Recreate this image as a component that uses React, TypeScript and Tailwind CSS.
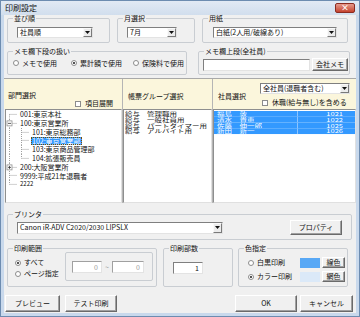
import React from 'react';

const FONT = "font-['Noto_Sans_CJK_JP','Noto_Sans',sans-serif]";

function Arrow() {
  return (
    <svg width="5" height="3" viewBox="0 0 5 3">
      <path d="M0 0H5L2.5 3Z" fill="#111" />
    </svg>
  );
}

function Select({ value, className = '' }: { value: string; className?: string }) {
  return (
    <div className={`flex items-stretch bg-white border border-[#7f7f7f] border-r-[#e3e3e3] border-b-[#e3e3e3] ${className}`}>
      <span className="flex-1 truncate pl-[2px] text-[7px] leading-[9px] self-center">{value}</span>
      <span className="flex w-[9px] items-center justify-center border border-[#fafafa] border-r-[#7a7a7a] border-b-[#7a7a7a] bg-[#ececec]">
        <Arrow />
      </span>
    </div>
  );
}

function Radio({ label, checked = false, className = '' }: { label: string; checked?: boolean; className?: string }) {
  return (
    <span className={`flex items-center gap-[3px] ${className}`}>
      <span className="flex h-[6px] w-[6px] shrink-0 items-center justify-center rounded-full border border-[#8c8c8c] bg-white">
        {checked && <span className="h-[2px] w-[2px] rounded-full bg-[#1a1a1a]" />}
      </span>
      <span className="whitespace-nowrap">{label}</span>
    </span>
  );
}

function Check({ label }: { label: string }) {
  return (
    <span className="flex items-center gap-[4px]">
      <span className="h-[6px] w-[6px] shrink-0 border border-[#8c8c8c] bg-white" />
      <span className="whitespace-nowrap">{label}</span>
    </span>
  );
}

function Btn({ children, className = '' }: { children: React.ReactNode; className?: string }) {
  return (
    <button
      type="button"
      className={`flex items-center justify-center bg-[#f0f0f0] border border-white border-r-[#6a6a6a] border-b-[#6a6a6a] shadow-[inset_-1px_-1px_0_#a0a0a0] text-[7px] leading-[7px] ${className}`}
    >
      {children}
    </button>
  );
}

function Group({ label, className = '', children }: { label?: string; className?: string; children?: React.ReactNode }) {
  return (
    <fieldset className={`rounded-[2px] border border-[#c9cdd2] ${className}`}>
      {label && <legend className="ml-[5px] px-[1px] text-[7px] leading-[7px]">{label}</legend>}
      {children}
    </fieldset>
  );
}

type TreeNode = { text: string; level: 0 | 1; box?: '-' | '+'; sel?: boolean; last?: boolean; first?: boolean };

const TREE: TreeNode[] = [
  { text: '001:東京本社', level: 0, first: true },
  { text: '100:東京営業所', level: 0, box: '-' },
  { text: '101:東京総務部', level: 1 },
  { text: '102:東京営業部', level: 1, sel: true },
  { text: '103:東京商品管理部', level: 1 },
  { text: '104:拡張販売員', level: 1, last: true },
  { text: '200:大阪営業所', level: 0, box: '+' },
  { text: '9999:平成21年退職者', level: 0 },
  { text: '2222', level: 0, last: true },
];

const ROW = 8.75;

function Connector({ n }: { n: TreeNode }) {
  const mid = ROW / 2;
  const w = n.level === 0 ? 12 : 24;
  const line = { stroke: '#a0a0a0', strokeWidth: 1, strokeDasharray: '1 1' };
  return (
    <svg width={w} height={ROW} viewBox={`0 0 ${w} ${ROW}`} className="shrink-0">
      {n.level === 0 ? (
        <>
          <line x1="3.5" y1={n.first ? mid : 0} x2="3.5" y2={n.last ? mid : ROW} {...line} />
          <line x1="3.5" y1={mid} x2="11" y2={mid} {...line} />
        </>
      ) : (
        <>
          <line x1="3.5" y1="0" x2="3.5" y2={ROW} {...line} />
          <line x1="15.5" y1="0" x2="15.5" y2={n.last ? mid : ROW} {...line} />
          <line x1="15.5" y1={mid} x2="23" y2={mid} {...line} />
        </>
      )}
      {n.box && (
        <>
          <rect x="1" y={mid - 2.5} width="5" height="5" fill="#fff" stroke="#919191" strokeWidth="0.8" />
          <line x1="2" y1={mid} x2="5" y2={mid} stroke="#333" strokeWidth="0.8" />
          {n.box === '+' && <line x1="3.5" y1={mid - 1.5} x2="3.5" y2={mid + 1.5} stroke="#333" strokeWidth="0.8" />}
        </>
      )}
    </svg>
  );
}

const FORMS = [
  ['給与', '管理職用'],
  ['給与', '一般社員用'],
  ['給与', 'パートタイマー用'],
  ['給与', 'アルバイト用'],
];

const STAFF = [
  ['福島　敦', '1021'],
  ['清水　貴恵', '1022'],
  ['佐藤　伸一郎', '1025'],
  ['新田　新一', '1026'],
];

export default function App() {
  return (
    <div className={`flex h-[317px] w-[360px] flex-col border border-[#6d8cb0] bg-[#c9d9ec] text-[#111] ${FONT}`}>
      {/* title bar */}
      <div className="flex h-[14px] items-center justify-between bg-linear-to-b from-[#e2eaf4] to-[#d1deed] pl-[4px] pr-[4px]">
        <span className="text-[8px] leading-[8px]">印刷設定</span>
        <span className="flex h-[10px] w-[20px] items-center justify-center rounded-[2px] border border-[#8b2b20] bg-linear-to-b from-[#e59a8c] to-[#c4402c] text-[8px] leading-[8px] font-bold text-white">
          ×
        </span>
      </div>

      {/* client area */}
      <div className="mx-[3px] mb-[3px] flex flex-1 flex-col bg-[#f0f0f0] text-[7px] leading-[7px]">
        {/* row 1 */}
        <div className="flex">
          <Group label="並び順" className="ml-[3px] h-[28px] w-[103px]">
            <Select value="社員順" className="ml-[9px] mt-[5px] h-[11px] w-[76px]" />
          </Group>
          <Group label="月選択" className="ml-[7px] h-[28px] w-[78px]">
            <Select value="7月" className="ml-[9px] mt-[5px] h-[11px] w-[50px]" />
          </Group>
          <Group label="用紙" className="ml-[7px] h-[28px] w-[146px]">
            <Select value="白紙(2人用/破線あり)" className="ml-[10px] mt-[5px] h-[11px] w-[124px]" />
          </Group>
        </div>

        {/* row 2 */}
        <div className="mt-[5px] flex">
          <Group label="メモ欄下段の扱い" className="ml-[3px] h-[27px] w-[180px]">
            <div className="mt-[4px] flex h-[8px] items-center pl-[5px]">
              <Radio label="メモで使用" className="w-[58px]" />
              <Radio label="累計額で使用" checked className="w-[62px]" />
              <Radio label="保険料で使用" />
            </div>
          </Group>
          <Group label="メモ欄上段(全社員)" className="ml-[11px] h-[27px] w-[152px]">
            <div className="mt-[3px] flex items-center gap-[2px] pl-[4px]">
              <div className="h-[12px] w-[107px] border border-[#7f7f7f] border-r-[#e3e3e3] border-b-[#e3e3e3] bg-white" />
              <Btn className="h-[13px] w-[36px]">会社メモ</Btn>
            </div>
          </Group>
        </div>

        {/* selection panel */}
        <div className="mt-[3px] flex h-[125px] border-t border-[#a9a9a9]">
          {/* departments */}
          <div className="flex w-[118px] flex-col">
            <div className="h-[30px] bg-[#fbf6dc] pl-[4px] pt-[13px]">
              <div>部門選択</div>
              <div className="ml-[67px] mt-[1px]">
                <Check label="項目展開" />
              </div>
            </div>
            <div className="flex-1 overflow-hidden border border-[#8e8f8f] border-r-[#e0e0e0] border-b-[#e0e0e0] bg-white ml-[1px]">
              {TREE.map(n => (
                <div key={n.text} className="flex items-center" style={{ height: ROW }}>
                  <Connector n={n} />
                  <span
                    className={`ml-[1px] whitespace-nowrap px-[1px] leading-[8px] ${
                      n.sel ? 'bg-[#3399ff] text-white outline outline-dotted outline-[#7a4f00] outline-offset-[-1px]' : ''
                    } ${n.text === '2222' ? 'text-[6px]' : ''}`}
                  >
                    {n.text}
                  </span>
                </div>
              ))}
            </div>
          </div>

          {/* form groups */}
          <div className="flex w-[90px] flex-col border-l border-[#b5b5b5]">
            <div className="h-[30px] bg-[#fbf6dc] pl-[5px] pt-[14px]">帳票グループ選択</div>
            <div className="flex-1 overflow-hidden border border-[#8e8f8f] border-r-[#e0e0e0] border-b-[#e0e0e0] bg-white pl-[1px] pt-[1px]">
              <div className="origin-top scale-y-[0.72]">
                {FORMS.map(([a, b]) => (
                  <div key={b} className="flex h-[8px] items-center text-[7.5px] leading-[8px]">
                    <span className="w-[22px]">{a}</span>
                    <span>{b}</span>
                  </div>
                ))}
              </div>
            </div>
          </div>

          {/* staff */}
          <div className="flex flex-1 flex-col border-l border-[#b5b5b5]">
            <div className="flex h-[30px] bg-[#fbf6dc]">
              <div className="w-[47px] pl-[5px] pt-[14px]">社員選択</div>
              <div className="flex flex-col pt-[4px]">
                <Select value="全社員(退職者含む)" className="h-[11px] w-[90px]" />
                <div className="ml-[2px] mt-[5px]">
                  <Check label="休職(給与無し)を含める" />
                </div>
              </div>
            </div>
            <div className="flex-1 overflow-hidden border border-[#8e8f8f] border-r-[#e0e0e0] border-b-[#e0e0e0] bg-white pt-[1px]">
              <div className="origin-top scale-y-[0.72]">
                {STAFF.map(([name, no]) => (
                  <div key={no} className="flex h-[8px] text-[7.5px] leading-[8px] text-white">
                    <span className="w-[84px] border-r border-[#8cc4ff] bg-[#3399ff] pl-[3px]">{name}</span>
                    <span className="flex-1 bg-[#3399ff] pr-[12px] text-right">{no}</span>
                  </div>
                ))}
              </div>
            </div>
          </div>
        </div>

        {/* printer */}
        <Group label="プリンタ" className="ml-[3px] mt-[8px] h-[29px] w-[345px]">
          <div className="mt-[2px] flex h-[15px] items-center pl-[9px] pr-[9px]">
            <Select value="Canon iR-ADV C2020/2030 LIPSLX" className="h-[12px] w-[206px]" />
            <Btn className="ml-auto h-[15px] w-[52px]">プロパティ</Btn>
          </div>
        </Group>

        {/* bottom groups */}
        <div className="mt-[5px] flex">
          <Group label="印刷範囲" className="ml-[3px] h-[42px] w-[150px]">
            <div className="flex">
              <div className="flex flex-col gap-[4px] pl-[7px] pt-[7px]">
                <Radio label="すべて" checked />
                <Radio label="ページ指定" />
              </div>
              <div className="ml-auto mr-[3px] flex h-[29px] w-[88px] items-start rounded-[2px] border border-[#c9cdd2] pl-[6px] pt-[8px]">
                <div className="h-[12px] w-[30px] border border-[#a0a0a0] border-r-[#e3e3e3] border-b-[#e3e3e3] bg-white pr-[3px] pt-[2px] text-right text-[#9a9a9a]">0</div>
                <span className="mx-[3px] mt-[3px] text-[#9a9a9a]">~</span>
                <div className="h-[12px] w-[32px] border border-[#a0a0a0] border-r-[#e3e3e3] border-b-[#e3e3e3] bg-white pr-[3px] pt-[2px] text-right text-[#9a9a9a]">0</div>
              </div>
            </div>
          </Group>
          <Group label="印刷部数" className="ml-[6px] h-[42px] w-[70px]">
            <div className="ml-[9px] mt-[10px] h-[12px] w-[30px] border border-[#7f7f7f] border-r-[#e3e3e3] border-b-[#e3e3e3] bg-white pr-[3px] pt-[2px] text-right">1</div>
          </Group>
          <Group label="色指定" className="ml-[5px] h-[42px] w-[110px]">
            <div className="mt-[5px] flex flex-col gap-[3px] pl-[9px]">
              <div className="flex h-[11px] items-center">
                <Radio label="白黒印刷" className="w-[52px]" />
                <span className="h-[10px] w-[20px] bg-[#58a8f5]" />
                <Btn className="ml-[2px] h-[11px] w-[23px]">線色</Btn>
              </div>
              <div className="flex h-[11px] items-center">
                <Radio label="カラー印刷" checked className="w-[52px]" />
                <span className="h-[10px] w-[20px] bg-[#dbe9f8]" />
                <Btn className="ml-[2px] h-[11px] w-[23px]">網色</Btn>
              </div>
            </div>
          </Group>
        </div>

        {/* buttons */}
        <div className="mt-[8px] flex">
          <Btn className="ml-[1px] h-[17px] w-[55px]">プレビュー</Btn>
          <Btn className="ml-[5px] h-[17px] w-[52px]">テスト印刷</Btn>
          <Btn className="ml-auto h-[17px] w-[62px]">OK</Btn>
          <Btn className="ml-[3px] mr-[3px] h-[17px] w-[53px]">キャンセル</Btn>
        </div>
      </div>
    </div>
  );
}
